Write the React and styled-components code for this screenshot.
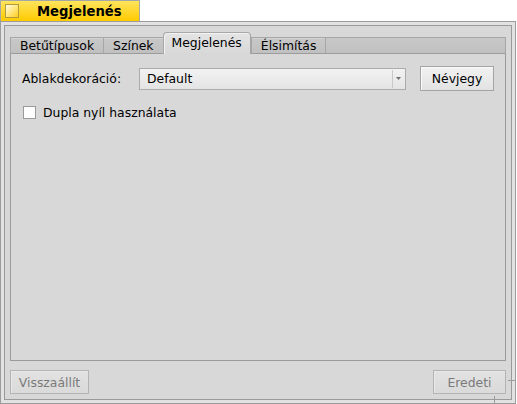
import React from "react";
import styled, { createGlobalStyle } from "styled-components";

const Global = createGlobalStyle`
  html, body {
    margin: 0;
    padding: 0;
    background: #ffffff;
  }
  body {
    font-family: "DejaVu Sans", "Liberation Sans", sans-serif;
    font-size: 12.4px;
    color: #000;
  }
`;

const Window = styled.div`
  width: 516px;
  height: 404px;
  display: flex;
  flex-direction: column;
`;

const TitleTab = styled.div`
  width: 140px;
  height: 21px;
  box-sizing: border-box;
  border: 1px solid #a6a6a6;
  border-bottom: none;
  background: linear-gradient(#ffe45c, #ffcb00);
  display: flex;
  align-items: center;
  gap: 18px;
  padding-left: 4px;
`;

const CloseBox = styled.div`
  width: 14px;
  height: 14px;
  box-sizing: border-box;
  border: 1px solid #b39a3a;
  background: linear-gradient(135deg, #fffbe6 0%, #ffe680 50%, #ffcf1a 100%);
`;

const Title = styled.span`
  font-weight: bold;
  font-size: 13.2px;
`;

const Frame = styled.div`
  position: relative;
  flex: 1;
  box-sizing: border-box;
  border: 1px solid #9c9c9c;
  background: #e2e2e2;
  padding: 3px;
  display: flex;
`;

const Content = styled.div`
  flex: 1;
  border: 1px solid #9a9a9a;
  background: #d8d8d8;
  padding: 6px 5px 5px 5px;
  display: flex;
  flex-direction: column;
`;

const TabView = styled.div`
  flex: 1;
  display: flex;
  flex-direction: column;
`;

const TabStrip = styled.div`
  height: 22px;
  display: flex;
  align-items: flex-end;
`;

const Tab = styled.div`
  box-sizing: border-box;
  height: ${(p) => (p.$active ? "22px" : "17px")};
  padding: 0 ${(p) => (p.$active ? 8 : 9)}px;
  display: flex;
  align-items: center;
  white-space: nowrap;
  border-top: 1px solid ${(p) => (p.$active ? "#a8a8a8" : "#a6a6a6")};
  border-left: 1px solid ${(p) => (p.$active ? "#a8a8a8" : "#a6a6a6")};
  border-right: ${(p) => (p.$active ? "1px solid #a6a6a6" : "none")};
  border-bottom: ${(p) => (p.$active ? "none" : "1px solid #9c9c9c")};
  border-radius: ${(p) => (p.$active ? "4px 4px 0 0" : "0")};
  background: ${(p) =>
    p.$active ? "linear-gradient(#e4e4e4, #d8d8d8)" : "linear-gradient(#c8c8c8, #c0c0c0)"};
  box-shadow: ${(p) => (p.$active ? "inset 1px 1px 0 #f2f2f2" : "inset 0 1px 0 #d4d4d4")};
  padding-bottom: ${(p) => (p.$active ? "3px" : "0")};
`;

const TabFill = styled.div`
  flex: 1;
  box-sizing: border-box;
  height: 17px;
  border-top: 1px solid #a6a6a6;
  border-left: 1px solid #a6a6a6;
  border-right: 1px solid #a6a6a6;
  border-bottom: 1px solid #9c9c9c;
  background: linear-gradient(#c8c8c8, #c0c0c0);
`;

const Panel = styled.div`
  flex: 1;
  border: 1px solid #9a9a9a;
  border-top: none;
  padding: 12px 11px 0 11px;
  display: flex;
  flex-direction: column;
  gap: 14px;
`;

const Row = styled.div`
  display: flex;
  align-items: center;
`;

const Label = styled.span`
  width: 117px;
  white-space: nowrap;
`;

const Select = styled.div`
  flex: 1;
  height: 22px;
  box-sizing: border-box;
  border: 1px solid #ababab;
  background: linear-gradient(#f2f2f2, #e4e4e4);
  display: flex;
  align-items: center;
  margin-right: 14px;
`;

const SelectText = styled.span`
  flex: 1;
  padding-left: 7px;
`;

const SelectArrow = styled.div`
  width: 11px;
  height: 18px;
  margin-right: 1px;
  border-left: 1px solid #c8c8c8;
  display: flex;
  align-items: center;
  justify-content: center;
`;

const Button = styled.div`
  box-sizing: border-box;
  width: ${(p) => p.$w}px;
  height: ${(p) => p.$h || 25}px;
  border: 1px solid ${(p) => (p.$disabled ? "#b4b4b4" : "#a4a4a4")};
  background: ${(p) =>
    p.$disabled ? "linear-gradient(#e2e2e2, #dadada)" : "linear-gradient(#f2f2f2, #e2e2e2)"};
  box-shadow: inset 1px 1px 0 ${(p) => (p.$disabled ? "#e8e8e8" : "#fafafa")};
  color: ${(p) => (p.$disabled ? "#7a7a7a" : "#000")};
  display: flex;
  align-items: center;
  justify-content: center;
`;

const CheckRow = styled.label`
  display: flex;
  align-items: center;
  gap: 7px;
  padding-left: 1px;
`;

const CheckBox = styled.div`
  width: 13px;
  height: 13px;
  box-sizing: border-box;
  border: 1px solid #9a9a9a;
  background: #fdfdfd;
`;

const Footer = styled.div`
  margin-top: 9px;
  height: 24px;
  display: flex;
  justify-content: space-between;
`;

const KnobV = styled.div`
  position: absolute;
  right: 20px;
  bottom: -1px;
  width: 1px;
  height: 8px;
  background: #9c9c9c;
`;

const KnobH = styled.div`
  position: absolute;
  right: -1px;
  bottom: 22px;
  width: 8px;
  height: 1px;
  background: #9c9c9c;
`;

export default function App() {
  return (
    <Window>
      <Global />
      <TitleTab>
        <CloseBox />
        <Title>Megjelenés</Title>
      </TitleTab>
      <Frame>
        <Content>
          <TabView>
            <TabStrip>
              <Tab>Betűtípusok</Tab>
              <Tab>Színek</Tab>
              <Tab $active>Megjelenés</Tab>
              <Tab>Élsimítás</Tab>
              <TabFill />
            </TabStrip>
            <Panel>
              <Row>
                <Label>Ablakdekoráció:</Label>
                <Select>
                  <SelectText>Default</SelectText>
                  <SelectArrow>
                    <svg width="5" height="3" viewBox="0 0 5 3">
                      <path d="M0 0h5L2.5 3z" fill="#707070" />
                    </svg>
                  </SelectArrow>
                </Select>
                <Button $w={74}>Névjegy</Button>
              </Row>
              <CheckRow>
                <CheckBox />
                <span>Dupla nyíl használata</span>
              </CheckRow>
            </Panel>
          </TabView>
          <Footer>
            <Button $w={79} $h={24} $disabled>
              Visszaállít
            </Button>
            <Button $w={73} $h={24} $disabled>
              Eredeti
            </Button>
          </Footer>
        </Content>
        <KnobV />
        <KnobH />
      </Frame>
    </Window>
  );
}
